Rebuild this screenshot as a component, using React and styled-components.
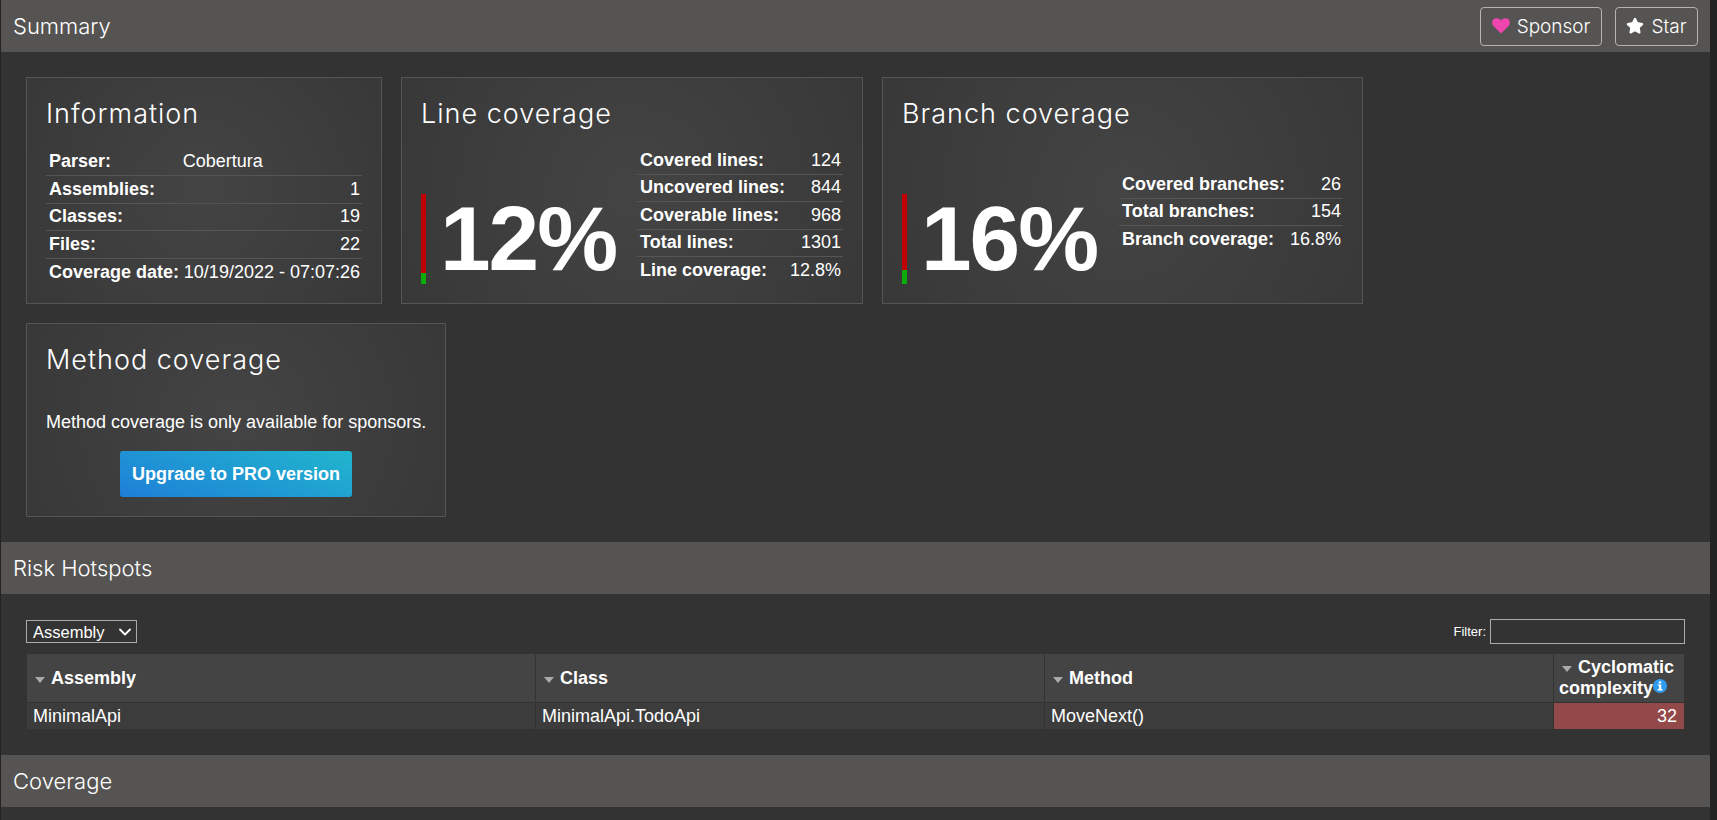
import React from 'react';
import styled, { createGlobalStyle } from 'styled-components';
import { ChevronDown, Star } from 'lucide-react';

const GlobalStyle = createGlobalStyle`
  html, body {
    margin: 0;
    height: 820px;
    overflow: hidden;
    background-color: #232323;
  }
  body {
    font-family: 'Liberation Sans', Arial, sans-serif;
    font-size: 18px;
    color: #fff;
  }
`;

const HEADING_FONT = `'Inter', 'Liberation Sans', sans-serif`;

const Page = styled.div`
  display: flex;
  height: 820px;
`;

const Content = styled.div`
  flex: 1;
  min-width: 0;
  margin-left: 1px;
  background-color: #333;
`;

const Scrollbar = styled.div`
  width: 7px;
  background-color: #232323;
`;

const SectionBar = styled.div`
  display: flex;
  align-items: center;
  justify-content: space-between;
  height: 52px;
  padding: 0 12px 0 12px;
  background: #555452;
`;

const SectionTitle = styled.h1`
  margin: 0;
  font-family: ${HEADING_FONT};
  font-size: 22px;
  font-weight: 300;
  color: #fff;
`;

const Actions = styled.div`
  display: flex;
  gap: 13px;
`;

const ActionLink = styled.a`
  display: flex;
  align-items: center;
  gap: 7px;
  box-sizing: border-box;
  height: 39px;
  padding: 0 10.5px;
  border: 1px solid #b4b4b4;
  border-radius: 4px;
  font-family: ${HEADING_FONT};
  font-size: 19px;
  font-weight: 300;
  color: #fff;
`;

const SummaryArea = styled.div`
  display: flex;
  flex-direction: column;
  gap: 19px;
  padding: 25px;
`;

const CardRow = styled.div`
  display: flex;
  gap: 19px;
`;

const Card = styled.div`
  box-sizing: border-box;
  width: ${({ $width }) => $width}px;
  height: ${({ $height }) => $height}px;
  padding: 20px 19px 0;
  border: 1px solid #555;
  background: radial-gradient(circle at center, #444 0%, #383838 100%);
`;

const CardTitle = styled.h2`
  margin: 0;
  font-family: ${HEADING_FONT};
  font-size: 27px;
  font-weight: 300;
  line-height: 32px;
  letter-spacing: 1px;
  color: #fff;
`;

const InfoTable = styled.table`
  margin: 18px 0 0;
  width: 316px;
  border-collapse: collapse;
`;

const InfoRow = styled.tr`
  height: 27.5px;
  border-bottom: 1px solid #555;
  &:last-child {
    border-bottom: none;
  }
`;

const Label = styled.th`
  padding: 0 2px 0 3px;
  font-weight: 700;
  text-align: left;
  white-space: nowrap;
`;

const Value = styled.td`
  padding: 0 2px 0 1px;
  text-align: ${({ $left }) => ($left ? 'left' : 'right')};
  white-space: nowrap;
`;

const CoverageBody = styled.div`
  display: flex;
  align-items: flex-end;
  justify-content: space-between;
  height: 154px;
`;

const Gauge = styled.div`
  display: flex;
  align-items: center;
  gap: 14px;
`;

const GaugeBar = styled.div`
  display: flex;
  flex-direction: column;
  width: 5px;
  height: 90px;
  background-color: #c00000;
`;

const GaugeCovered = styled.div`
  margin-top: auto;
  background-color: #0aad0a;
`;

const Percent = styled.div`
  font-size: 91px;
  font-weight: 700;
  line-height: 90px;
  letter-spacing: -2px;
`;

const StatsTable = styled.table`
  width: ${({ $width }) => $width}px;
  margin-bottom: ${({ $bottom }) => $bottom}px;
  border-collapse: collapse;
`;

const SponsorNote = styled.p`
  margin: 36px 0 0;
  font-size: 18px;
  line-height: 20px;
  white-space: nowrap;
  color: #fff;
`;

const Centered = styled.div`
  display: flex;
  justify-content: center;
  margin-top: 19px;
`;

const UpgradeButton = styled.a`
  display: block;
  padding: 0 12px;
  height: 46px;
  line-height: 46px;
  border-radius: 3px;
  font-weight: 700;
  background: linear-gradient(20deg, #1e7fd8 0%, #21b6cd 100%);
  color: #fff;
`;

const RiskArea = styled.div`
  padding: 25px;
`;

const Toolbar = styled.div`
  display: flex;
  align-items: center;
  justify-content: space-between;
  height: 25px;
  margin-bottom: 9px;
`;

const SelectWrap = styled.div`
  position: relative;
  width: 111px;
  height: 23px;
`;

const AssemblySelect = styled.select`
  display: block;
  box-sizing: border-box;
  width: 100%;
  height: 100%;
  border: 1px solid #aaa;
  border-radius: 0;
  padding: 0 6px;
  appearance: none;
  background-color: #333;
  color: #fff;
  font-family: 'Liberation Sans', Arial, sans-serif;
  font-size: 16.5px;
`;

const SelectChevron = styled(ChevronDown)`
  position: absolute;
  top: 2px;
  right: 2px;
  pointer-events: none;
`;

const FilterWrap = styled.label`
  display: flex;
  align-items: center;
  gap: 4px;
  font-size: 13px;
`;

const FilterInput = styled.input`
  box-sizing: border-box;
  width: 195px;
  height: 25px;
  border: 1px solid #aaa;
  background-color: #333;
  outline: none;
`;

const RiskTable = styled.table`
  width: 100%;
  table-layout: fixed;
  border-collapse: collapse;
`;

const HeadCell = styled.th`
  box-sizing: border-box;
  width: ${({ $width }) => ($width ? `${$width}px` : 'auto')};
  height: 49px;
  padding: 0 5px;
  border: 1px solid #333;
  background-color: #444;
  font-size: 18px;
  line-height: 21px;
  font-weight: 700;
  text-align: left;
`;

const SortArrow = styled.span`
  display: inline-block;
  width: 0;
  height: 0;
  margin: 0 6px 1px 3px;
  border-left: 5px solid transparent;
  border-right: 5px solid transparent;
  border-top: 6px solid #aaa;
`;

const BodyCell = styled.td`
  box-sizing: border-box;
  height: 27px;
  padding: 0 7px 0 6px;
  border: 1px solid #333;
  background-color: ${({ $risk }) => ($risk ? '#934949' : '#3c3c3c')};
  text-align: ${({ $risk }) => ($risk ? 'right' : 'left')};
`;

const InfoGlyph = styled.svg`
  vertical-align: 1px;
`;

const InfoIcon = () => (
  <InfoGlyph width="14" height="14" viewBox="0 0 14 14">
    <circle cx="7" cy="7" r="7" fill="#2f9cf0" />
    <rect x="5.8" y="2.4" width="2.4" height="2" fill="#fff" />
    <path d="M4.8 5.4h3.4v4.6h1.2v1.4H4.8V10h1.2V6.8H4.8z" fill="#fff" />
  </InfoGlyph>
);

const HeartIcon = () => (
  <svg width="18" height="16" viewBox="0 0 18 16">
    <path
      d="M9 15.6 1.6 8.2C-.4 6.2-.3 3 1.6 1.3 3.6-.4 6.6-.1 8.2 1.7L9 2.6l.8-.9c1.6-1.8 4.6-2.1 6.6-.4 1.9 1.7 2 4.9 0 6.9z"
      fill="#ef45ae"
    />
  </svg>
);

const infoRows = [
  ['Parser:', 'Cobertura', true],
  ['Assemblies:', '1'],
  ['Classes:', '19'],
  ['Files:', '22'],
  ['Coverage date:', '10/19/2022 - 07:07:26'],
];

const lineRows = [
  ['Covered lines:', '124'],
  ['Uncovered lines:', '844'],
  ['Coverable lines:', '968'],
  ['Total lines:', '1301'],
  ['Line coverage:', '12.8%'],
];

const branchRows = [
  ['Covered branches:', '26'],
  ['Total branches:', '154'],
  ['Branch coverage:', '16.8%'],
];

const StatRows = ({ rows }) => (
  <tbody>
    {rows.map(([label, value, left]) => (
      <InfoRow key={label}>
        <Label>{label}</Label>
        <Value $left={left}>{value}</Value>
      </InfoRow>
    ))}
  </tbody>
);

const App = () => (
  <Page>
    <GlobalStyle />
    <Content>
      <SectionBar>
        <SectionTitle>Summary</SectionTitle>
        <Actions>
          <ActionLink>
            <HeartIcon />
            Sponsor
          </ActionLink>
          <ActionLink>
            <Star size={18} fill="#fff" color="#fff" />
            Star
          </ActionLink>
        </Actions>
      </SectionBar>

      <SummaryArea>
        <CardRow>
          <Card $width={356} $height={227}>
            <CardTitle>Information</CardTitle>
            <InfoTable>
              <StatRows rows={infoRows} />
            </InfoTable>
          </Card>
          <Card $width={462} $height={227}>
            <CardTitle>Line coverage</CardTitle>
            <CoverageBody>
              <Gauge>
                <GaugeBar>
                  <GaugeCovered style={{ height: '12%' }} />
                </GaugeBar>
                <Percent>12%</Percent>
              </Gauge>
              <StatsTable $width={206} $bottom={0}>
                <StatRows rows={lineRows} />
              </StatsTable>
            </CoverageBody>
          </Card>
          <Card $width={481} $height={227}>
            <CardTitle>Branch coverage</CardTitle>
            <CoverageBody>
              <Gauge>
                <GaugeBar>
                  <GaugeCovered style={{ height: '16%' }} />
                </GaugeBar>
                <Percent>16%</Percent>
              </Gauge>
              <StatsTable $width={224} $bottom={31}>
                <StatRows rows={branchRows} />
              </StatsTable>
            </CoverageBody>
          </Card>
        </CardRow>
        <CardRow>
          <Card $width={420} $height={194}>
            <CardTitle>Method coverage</CardTitle>
            <SponsorNote>Method coverage is only available for sponsors.</SponsorNote>
            <Centered>
              <UpgradeButton>Upgrade to PRO version</UpgradeButton>
            </Centered>
          </Card>
        </CardRow>
      </SummaryArea>

      <SectionBar>
        <SectionTitle>Risk Hotspots</SectionTitle>
      </SectionBar>

      <RiskArea>
        <Toolbar>
          <SelectWrap>
            <AssemblySelect defaultValue="Assembly">
              <option>Assembly</option>
            </AssemblySelect>
            <SelectChevron size={20} color="#fff" strokeWidth={2.2} />
          </SelectWrap>
          <FilterWrap>
            Filter:
            <FilterInput />
          </FilterWrap>
        </Toolbar>
        <RiskTable>
          <thead>
            <tr>
              <HeadCell><SortArrow />Assembly</HeadCell>
              <HeadCell><SortArrow />Class</HeadCell>
              <HeadCell><SortArrow />Method</HeadCell>
              <HeadCell $width={131}>
                <SortArrow />Cyclomatic complexity<InfoIcon />
              </HeadCell>
            </tr>
          </thead>
          <tbody>
            <tr>
              <BodyCell>MinimalApi</BodyCell>
              <BodyCell>MinimalApi.TodoApi</BodyCell>
              <BodyCell>MoveNext()</BodyCell>
              <BodyCell $risk>32</BodyCell>
            </tr>
          </tbody>
        </RiskTable>
      </RiskArea>

      <SectionBar>
        <SectionTitle>Coverage</SectionTitle>
      </SectionBar>
    </Content>
    <Scrollbar />
  </Page>
);

export default App;
